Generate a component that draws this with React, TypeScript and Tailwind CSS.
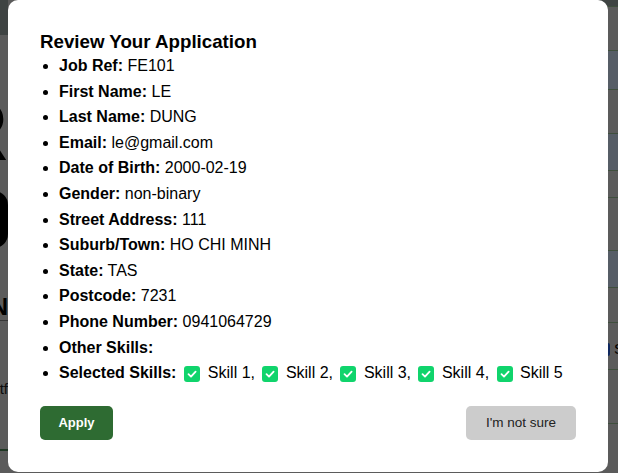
import React from "react"

const details: [string, string][] = [
  ["Job Ref", "FE101"],
  ["First Name", "LE"],
  ["Last Name", "DUNG"],
  ["Email", "le@gmail.com"],
  ["Date of Birth", "2000-02-19"],
  ["Gender", "non-binary"],
  ["Street Address", "111"],
  ["Suburb/Town", "HO CHI MINH"],
  ["State", "TAS"],
  ["Postcode", "7231"],
  ["Phone Number", "0941064729"],
  ["Other Skills", ""],
]

const skills = ["Skill 1", "Skill 2", "Skill 3", "Skill 4", "Skill 5"]

// rows of the table peeking out on the right of the dialog
const tableRows = [
  { h: "h-[44px]", tint: false },
  { h: "h-[39px]", tint: true },
  { h: "h-[44px]", tint: false },
  { h: "h-[37px]", tint: true },
  { h: "h-[27px]", tint: false },
  { h: "h-[53px]", tint: false },
  { h: "h-[37px]", tint: true },
  { h: "h-[35px]", tint: false },
  { h: "h-[47px]", tint: false, check: true },
  { h: "h-[54px]", tint: false },
  { h: "h-[50px]", tint: false },
]

function Tick() {
  return (
    <span className="inline-flex items-center justify-center w-[16px] h-[16px] rounded-[3px] bg-[#10d46c] align-[-2px]">
      <svg width="12" height="12" viewBox="0 0 12 12" fill="none">
        <path d="M2.5 6.2L5 8.6L9.6 3.6" stroke="white" strokeWidth="1.8" strokeLinecap="round" strokeLinejoin="round" />
      </svg>
    </span>
  )
}

function BackgroundPage() {
  return (
    <div className="flex h-[473px] w-full overflow-hidden bg-[#e4e4e4] font-['Liberation_Sans',Arial,sans-serif]">
      {/* left edge of the page */}
      <div className="w-[8px] flex flex-col overflow-hidden">
        <div className="h-[35px] bg-[#9eaaa8] shrink-0" />
        <div className="mt-[66px] h-[60px] flex justify-end overflow-hidden shrink-0">
          <span className="text-[84px] leading-[60px] font-bold text-black">R</span>
        </div>
        <div className="mt-[30px] h-[57px] flex justify-end overflow-hidden shrink-0">
          <div className="w-[60px] h-[57px] rounded-[14px] bg-black shrink-0" />
        </div>
        <div className="mt-[45px] h-[28px] border-b border-[#8a8a8a] flex justify-end overflow-hidden shrink-0">
          <span className="text-[24px] leading-[28px] font-bold text-black">N</span>
        </div>
        <div className="mt-[58px] flex justify-end overflow-hidden shrink-0">
          <span className="text-[15px] leading-[20px] text-[#222]">platf</span>
        </div>
        <div className="mt-[50px] h-[2px] bg-[#4f8a5a] shrink-0" />
      </div>

      <div className="flex-1" />

      {/* right edge: a table */}
      <div className="w-[20px] flex flex-col overflow-hidden">
        <div className="h-[6px] bg-[#9eaaa8] shrink-0" />
        {tableRows.map((r, i) => (
          <div
            key={i}
            className={`${r.h} shrink-0 border-t border-[#9fc59a] ${r.tint ? "bg-[#d7e8ff]" : "bg-[#e4e4e4]"} flex items-center pt-[6px]`}
          >
            {r.check && (
              <>
                <span className="ml-[-1px] w-[13px] h-[13px] rounded-[2px] bg-[#2563eb] shrink-0" />
                <span className="ml-[4px] text-[15px] text-black">Skill</span>
              </>
            )}
          </div>
        ))}
      </div>
    </div>
  )
}

export default function App() {
  return (
    <div className="relative w-[618px] h-[473px] overflow-hidden">
      <BackgroundPage />

      <div className="fixed inset-0 bg-black/60 flex items-start font-['Liberation_Sans',Arial,sans-serif]">
        <div className="ml-[8px] w-[600px] bg-white rounded-[10px] px-[32px] pt-[31px] pb-[32px] text-black">
          <h3 className="text-[18.72px] leading-[21px] font-bold">Review Your Application</h3>

          <ul className="mt-[1px] list-disc pl-[19px] text-[16px] leading-[25.6px]">
            {details.map(([label, value]) => (
              <li key={label}>
                <strong>{label}:</strong> {value}
              </li>
            ))}
            <li>
              <strong>Selected Skills:</strong>
              {skills.map((s, i) => (
                <React.Fragment key={s}>
                  <span className={i === 0 ? "ml-[8px] mr-[3px]" : "ml-[3px] mr-[3px]"}>
                    <Tick />
                  </span>{" "}
                  {s}
                  {i < skills.length - 1 ? ", " : ""}
                </React.Fragment>
              ))}
            </li>
          </ul>

          <div className="mt-[20px] flex justify-between">
            <button className="w-[73px] h-[34px] rounded-[5px] bg-[#2e6b32] text-white text-[13px] font-bold">
              Apply
            </button>
            <button className="w-[110px] h-[34px] rounded-[5px] bg-[#cccccc] text-[#222] text-[13.5px]">
              I'm not sure
            </button>
          </div>
        </div>
      </div>
    </div>
  )
}
